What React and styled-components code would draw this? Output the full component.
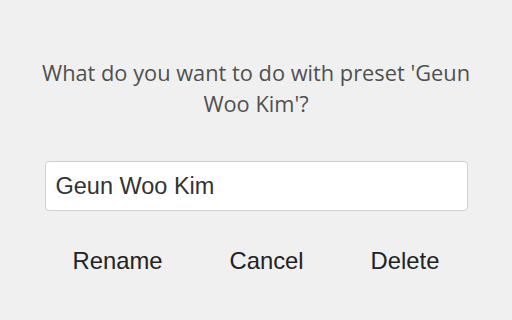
import styled, { createGlobalStyle } from "styled-components";

const GlobalStyle = createGlobalStyle`
	html, body {
		margin: 0;
		padding: 0;
		background: #f0f0f0;
	}
	body {
		width: 512px;
		height: 320px;
		overflow: hidden;
	}
`;

const App = () => {
	return (
		<>
			<GlobalStyle />
			<Dialog>
				<Message>What do you want to do with preset 'Geun Woo Kim'?</Message>
				<NameInput type="text" defaultValue="Geun Woo Kim" />
				<ButtonRow>
					<ActionButton>Rename</ActionButton>
					<ActionButton>Cancel</ActionButton>
					<ActionButton>Delete</ActionButton>
				</ButtonRow>
			</Dialog>
		</>
	);
};
export default App;

const Dialog = styled.div`
	width: 512px;
	height: 320px;
	box-sizing: border-box;
	padding: 57px 45px 0;
	display: flex;
	flex-direction: column;
	align-items: center;
`;

const Message = styled.p`
	margin: 0;
	font-family: "Open Sans", sans-serif;
	font-size: 21.8px;
	line-height: 31px;
	color: #505050;
	text-align: center;
	width: 440px;
`;

const NameInput = styled.input`
	margin-top: 42px;
	width: 423px;
	height: 50px;
	box-sizing: border-box;
	padding: 0 10px;
	border: 1px solid #cfcfcf;
	border-radius: 4px;
	background: #fff;
	font-family: "Liberation Sans", Arial, sans-serif;
	font-size: 23.5px;
	color: #333;
	outline: none;
`;

const ButtonRow = styled.div`
	margin-top: 36px;
	display: flex;
	justify-content: center;
	gap: 67px;
`;

const ActionButton = styled.button`
	padding: 0;
	border: none;
	background: none;
	font-family: "Liberation Sans", Arial, sans-serif;
	font-size: 23.8px;
	line-height: 27px;
	color: #222;
	cursor: pointer;
`;
